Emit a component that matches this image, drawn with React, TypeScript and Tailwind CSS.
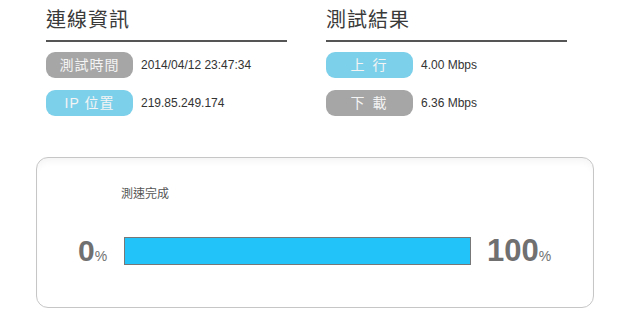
import React from 'react';

const cjk = { fontFamily: '"Liberation Sans", "Noto Sans CJK TC", sans-serif' };

function Pill({ label, tone, wide }: { label: string; tone: 'gray' | 'blue'; wide?: boolean }) {
    return (
        <div
            className={`w-[87px] h-[26px] rounded-[9px] flex items-center justify-center text-[14px] text-[#f4f4f4] ${
                wide ? 'tracking-[2px]' : 'tracking-[1px]'
            } ${tone === 'gray' ? 'bg-[#a6a6a6]' : 'bg-[#7dd0ea]'}`}
        >
            {label}
        </div>
    );
}

type Row = { label: string; tone: 'gray' | 'blue'; value: string; wide?: boolean };

function Section({ title, rows }: { title: string; rows: Row[] }) {
    return (
        <div className="w-[241px]">
            <div className="h-[42px] border-b-2 border-[#555] pt-[6px] text-[20px] leading-[28px] text-[#3a3a3a] tracking-[1px]">
                {title}
            </div>
            <div className="mt-[10px] flex flex-col gap-[12px]">
                {rows.map((r) => (
                    <div key={r.label} className="flex items-center gap-[8px]">
                        <Pill label={r.label} tone={r.tone} wide={r.wide} />
                        <span className="text-[12px] text-[#333]">{r.value}</span>
                    </div>
                ))}
            </div>
        </div>
    );
}

export default function App() {
    return (
        <div className="w-[640px] h-[325px] bg-white overflow-hidden" style={cjk}>
            <div className="flex gap-[39px] pl-[46px]">
                <Section
                    title="連線資訊"
                    rows={[
                        { label: '測試時間', tone: 'gray', value: '2014/04/12 23:47:34' },
                        { label: 'IP 位置', tone: 'blue', value: '219.85.249.174' },
                    ]}
                />
                <Section
                    title="測試結果"
                    rows={[
                        { label: '上 行', tone: 'blue', value: '4.00 Mbps', wide: true },
                        { label: '下 載', tone: 'gray', value: '6.36 Mbps', wide: true },
                    ]}
                />
            </div>

            {/* Progress box */}
            <div className="ml-[36px] mt-[41px] w-[558px] h-[151px] rounded-[12px] border border-[#c6c6c6] shadow-[inset_0_6px_8px_-4px_rgba(0,0,0,0.06)] pt-[28px]">
                <div className="pl-[84px] text-[12px] text-[#555] leading-[16px]">測速完成</div>
                <div className="mt-[33px] flex items-center pl-[41px]">
                    <div className="w-[46px] text-[#707070] font-bold leading-none">
                        <span className="text-[30px]">0</span>
                        <span className="text-[14px] font-normal">%</span>
                    </div>
                    <div className="w-[347px] h-[28px] bg-[#22c3f8] border border-[#777]" />
                    <div className="ml-[16px] text-[#707070] font-bold leading-none">
                        <span className="text-[31px]">100</span>
                        <span className="text-[14px] font-normal">%</span>
                    </div>
                </div>
            </div>
        </div>
    );
}
